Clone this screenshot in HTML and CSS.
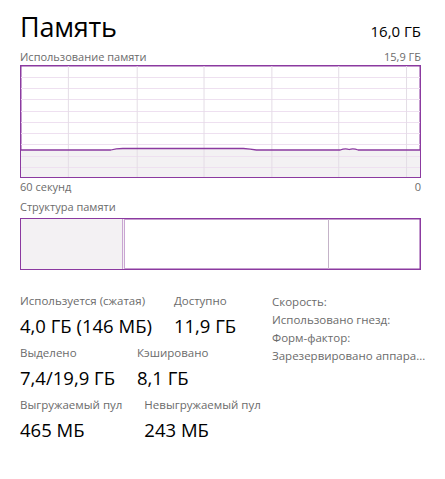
FILE: index.html
```html
<!DOCTYPE html>
<html lang="ru">
<head>
    <meta charset="UTF-8">
    <link rel="stylesheet" href="styles.css">
    <title>Память</title>
</head>
<body>
    <div class="page">
        <div class="head">
            <div class="title">Память</div>
            <div class="total">16,0 ГБ</div>
        </div>

        <div class="caption">
            <span>Использование памяти</span>
            <span>15,9 ГБ</span>
        </div>
        <div class="chart">
            <svg viewBox="0 0 400 111" preserveAspectRatio="none">
                <g stroke="#eee0f0" stroke-width="1">
                    <line x1="0" y1="11.5" x2="400" y2="11.5"/>
                    <line x1="0" y1="22.5" x2="400" y2="22.5"/>
                    <line x1="0" y1="33.5" x2="400" y2="33.5"/>
                    <line x1="0" y1="45.5" x2="400" y2="45.5"/>
                    <line x1="0" y1="56.5" x2="400" y2="56.5"/>
                    <line x1="0" y1="67.5" x2="400" y2="67.5"/>
                    <line x1="0" y1="78.5" x2="400" y2="78.5"/>
                    <line x1="0" y1="90.5" x2="400" y2="90.5"/>
                    <line x1="0" y1="101.5" x2="400" y2="101.5"/>
                </g>
                <path d="M0 84 L90 84 Q95 82.5 102 82.5 L223 82.5 Q230 83 236 84 L320 84 Q325 82 329 83.5 Q333 82 338 84 L400 84 L400 111 L0 111 Z" fill="#f3f1f3"/>
                <g stroke="#eee0f0" stroke-width="1">
                    <line x1="0" y1="90.5" x2="400" y2="90.5"/>
                    <line x1="0" y1="101.5" x2="400" y2="101.5"/>
                </g>
                <g stroke="#e4dde6" stroke-width="1">
                    <line x1="47.5" y1="0" x2="47.5" y2="111"/>
                    <line x1="116.5" y1="0" x2="116.5" y2="111"/>
                    <line x1="183.5" y1="0" x2="183.5" y2="111"/>
                    <line x1="251.5" y1="0" x2="251.5" y2="111"/>
                    <line x1="318.5" y1="0" x2="318.5" y2="111"/>
                    <line x1="386.5" y1="0" x2="386.5" y2="111"/>
                </g>
                <path d="M0 84 L90 84 Q95 82.5 102 82.5 L223 82.5 Q230 83 236 84 L320 84 Q325 82 329 83.5 Q333 82 338 84 L400 84" fill="none" stroke="#8b3aa0" stroke-width="1.3"/>
            </svg>
        </div>
        <div class="axis">
            <span>60 секунд</span>
            <span>0</span>
        </div>

        <div class="caption struct-caption">
            <span>Структура памяти</span>
        </div>
        <div class="struct">
            <div class="seg seg-used"></div>
            <div class="seg seg-mod"></div>
            <div class="seg seg-free"></div>
        </div>

        <div class="stats">
            <div class="stats-left">
                <div class="row">
                    <div class="stat">
                        <div class="label">Используется (сжатая)</div>
                        <div class="value">4,0 ГБ (146 МБ)</div>
                    </div>
                    <div class="stat">
                        <div class="label">Доступно</div>
                        <div class="value">11,9 ГБ</div>
                    </div>
                </div>
                <div class="row">
                    <div class="stat">
                        <div class="label">Выделено</div>
                        <div class="value">7,4/19,9 ГБ</div>
                    </div>
                    <div class="stat">
                        <div class="label">Кэшировано</div>
                        <div class="value">8,1 ГБ</div>
                    </div>
                </div>
                <div class="row">
                    <div class="stat">
                        <div class="label">Выгружаемый пул</div>
                        <div class="value">465 МБ</div>
                    </div>
                    <div class="stat">
                        <div class="label">Невыгружаемый пул</div>
                        <div class="value">243 МБ</div>
                    </div>
                </div>
            </div>
            <div class="stats-right">
                <div class="label">Скорость:</div>
                <div class="label">Использовано гнезд:</div>
                <div class="label">Форм-фактор:</div>
                <div class="label">Зарезервировано аппара...</div>
            </div>
        </div>
    </div>
</body>
</html>
```

FILE: styles.css
```css
body {
    margin: 0;
    background-color: #ffffff;
    font-family: "Open Sans", "Noto Sans", sans-serif;
    color: #000000;
}

.page {
    width: 401px;
    padding: 8px 0 0 20px;
}

.head {
    display: flex;
    justify-content: space-between;
    align-items: baseline;
    height: 40px;
}

.title {
    font-size: 27px;
    font-weight: 400;
    letter-spacing: -0.2px;
}

.total {
    font-size: 15px;
}

.caption {
    display: flex;
    justify-content: space-between;
    font-size: 11px;
    color: #6b6b6b;
    height: 17px;
    line-height: 17px;
}

.chart {
    height: 111px;
    border: 1px solid #8b3aa0;
    box-shadow: inset 0 0 0 0.5px #8b3aa0;
}

.chart svg {
    display: block;
    width: 100%;
    height: 100%;
}

.axis {
    display: flex;
    justify-content: space-between;
    font-size: 11px;
    color: #6b6b6b;
    height: 17px;
    line-height: 18px;
}

.struct-caption {
    height: 23px;
    line-height: 23px;
}

.struct {
    display: flex;
    height: 50px;
    border: 1px solid #8b3aa0;
    box-shadow: inset 0 0 0 0.5px #8b3aa0;
}

.seg-used {
    width: 101px;
    background-color: #f3f1f3;
    border-right: 3px double #c9a5d2;
}

.seg-mod {
    width: 203px;
    border-right: 1px solid #c4b3c8;
}

.seg-free {
    flex: 1;
}

.stats {
    display: flex;
    margin-top: 23px;
}

.stats-left {
    width: 252px;
    flex-shrink: 0;
}

.row {
    display: flex;
    gap: 22px;
    margin-bottom: 2px;
}

.label {
    font-size: 11.5px;
    color: #6b6b6b;
    line-height: 16px;
    white-space: nowrap;
}

.value {
    font-size: 18.5px;
    line-height: 34px;
    height: 34px;
    white-space: nowrap;
}

.stats-right .label {
    line-height: 18px;
}
```
